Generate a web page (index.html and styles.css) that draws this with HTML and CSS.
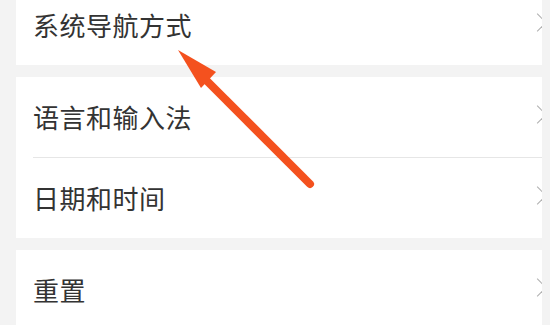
FILE: index.html
```html
<!DOCTYPE html>
<html lang="zh-CN">
<head>
    <meta charset="UTF-8">
    <meta name="viewport" content="width=device-width, initial-scale=1.0">
    <title>设置</title>
    <link rel="stylesheet" href="styles.css">
</head>
<body>

    <!-- 设置列表 -->
    <div class="settings">
        <div class="card">
            <div class="row">
                <span class="label">系统导航方式</span>
                <span class="chevron"></span>
            </div>
        </div>

        <div class="card">
            <div class="row">
                <span class="label">语言和输入法</span>
                <span class="chevron"></span>
            </div>
            <div class="row">
                <span class="label">日期和时间</span>
                <span class="chevron"></span>
            </div>
        </div>

        <div class="card">
            <div class="row">
                <span class="label">重置</span>
                <span class="chevron"></span>
            </div>
        </div>
    </div>

    <!-- 标注箭头 -->
    <svg class="pointer" width="550" height="325" viewBox="0 0 550 325">
        <line x1="310" y1="184" x2="202" y2="76" stroke="#f4511e" stroke-width="8" stroke-linecap="round"/>
        <polygon points="178,50 216,72 201,88" fill="#f4511e"/>
    </svg>

</body>
</html>
```

FILE: styles.css
```css
/* 全局 */
body {
    margin: 0;
    width: 550px;
    height: 325px;
    overflow: hidden;
    position: relative;
    background: #f3f3f3;
    font-family: 'Noto Sans CJK SC', sans-serif;
    color: #333333;
}

.settings {
    display: flex;
    flex-direction: column;
    gap: 12px;
    margin-top: -15px;
    padding: 0 8px 0 16px;
}

.card {
    background: #ffffff;
    overflow: hidden;
}

.row {
    height: 80px;
    margin-left: 17px;
    display: flex;
    align-items: center;
    justify-content: space-between;
}

.row + .row {
    border-top: 1px solid #e6e6e6;
}

.label {
    font-size: 26px;
    letter-spacing: 0.5px;
    line-height: 1;
}

/* 右侧箭头 */
.chevron {
    width: 12px;
    height: 12px;
    border-top: 1.5px solid #b0b0b0;
    border-right: 1.5px solid #b0b0b0;
    transform: rotate(45deg);
    margin-right: -2px;
    margin-top: -6px;
}

/* 标注 */
.pointer {
    position: absolute;
    left: 0;
    top: 0;
}
```
